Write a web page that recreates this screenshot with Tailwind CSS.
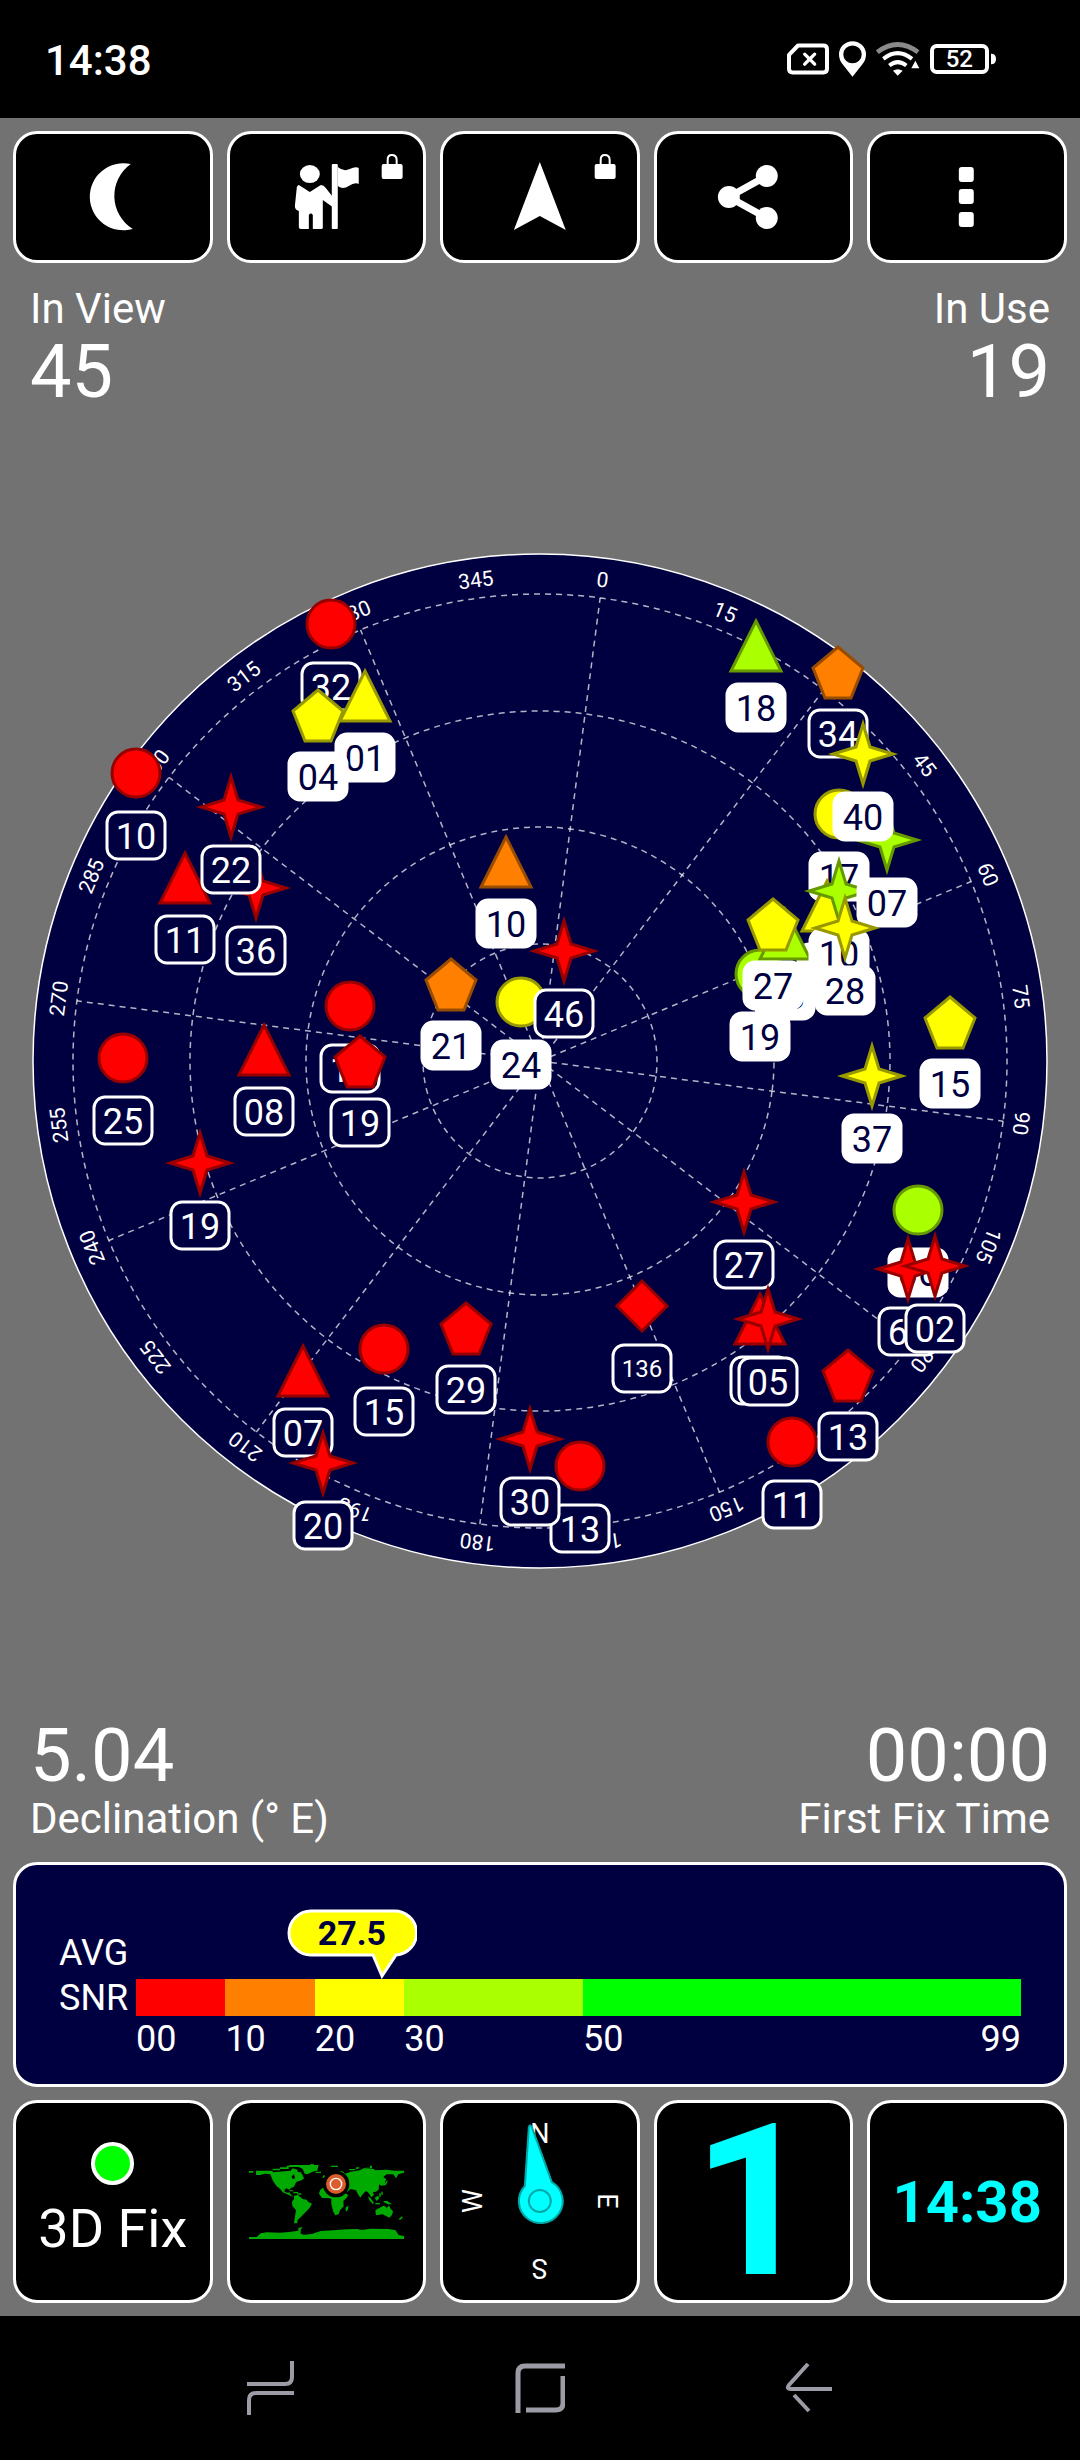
<!DOCTYPE html>
<html lang="en">
<head>
    <meta charset="UTF-8">
    <meta name="viewport" content="width=device-width, initial-scale=1.0">
    <title>GPS Status - Sky View</title>
    <script src="https://cdn.jsdelivr.net/npm/@tailwindcss/browser@4"></script>
</head>
<body class="min-h-screen flex flex-col bg-black text-white font-['Roboto',sans-serif]">

    <!-- Status bar -->
    <header class="h-[118px] flex items-center justify-between pl-[45px] pr-[84px]">
        <span class="pt-1 text-[42px] leading-[48px] font-medium">14:38</span>
        <div class="flex items-center gap-[10px]">
            <svg class="w-[42px] h-[32px]" viewBox="81 72 126 93" fill="none" stroke="#fff" stroke-width="12">
                <path d="M114 78H190Q201 78 201 89V148Q201 159 190 159H98Q87 159 87 148V106Z" stroke-linejoin="round"/>
                <path d="M134 104L164 134M164 104L134 134" stroke-linecap="round" stroke-width="10"/>
            </svg>
            <svg class="w-[27px] h-[36px]" viewBox="243 63 82 108" fill="#fff" fill-rule="evenodd">
                <path d="M284 171L254 133Q243 119 243 103A41 40 0 0 1 325 103Q325 119 314 133ZM284 76A28 27 0 1 0 284 130A28 27 0 1 0 284 76Z"/>
            </svg>
            <svg class="w-[44px] h-[34px]" viewBox="352 66 132 101" fill="none" stroke="#fff" stroke-width="12">
                <path d="M356 96Q417 50 478 96" stroke="#8a8a8a" stroke-width="14"/>
                <path d="M374 116Q417 82 460 116M392 136Q417 116 443 136"/>
                <path d="M403 152Q417 142 432 152L417 167ZM470 122L482 144H458Z" fill="#fff" stroke="none"/>
            </svg>
            <svg class="w-[66px] h-[30px]" viewBox="510 72 198 90" fill="none" stroke="#fff" stroke-width="12">
                <rect x="516" y="78" width="165" height="78" rx="14"/>
                <path d="M693 101Q708 101 708 117Q708 133 693 133Z" fill="#fff" stroke="none"/>
                <text x="598" y="142" text-anchor="middle" font-size="72" font-weight="500" fill="#fff" stroke="none">52</text>
            </svg>
        </div>
    </header>

    <main class="flex-1 flex flex-col bg-[#727272] p-[13px]">

        <!-- Toolbar -->
        <div class="grid grid-cols-5 gap-[14px]">
            <button type="button" aria-label="Night mode" class="h-[132px] rounded-3xl border-3 border-white bg-black">
                <svg class="w-full h-full" viewBox="3 3 194 126" fill="#fff">
                    <path d="M118 33A33.6 33.6 0 1 0 120 98A39 39 0 0 1 118 33Z"/>
                </svg>
            </button>
            <button type="button" aria-label="Guide to location" class="h-[132px] rounded-3xl border-3 border-white bg-black">
                <svg class="w-full h-full" viewBox="3 3 194 126" fill="#fff">
                    <ellipse cx="83" cy="43" rx="10" ry="9"/>
                    <path d="M72 54L83 61L94 54Q97 54 99 57L110 71V79L96 69V97Q96 98 94 98H86V84Q84 81 82 84V98H74Q72 98 72 96V80Q68 79 68 75L70 56Q71 54 72 54Z"/>
                    <rect x="105" y="33" width="6" height="65" rx="1"/>
                    <path d="M111 36Q117 41 123 38T132 37V53Q128 51 122 55T111 55Z"/>
                    <path d="M157 33H174Q176 33 176 35V46Q176 48 174 48H157Q155 48 155 46V35Q155 33 157 33Z"/>
                    <path d="M161 34V29Q161 24 165 24Q170 24 170 29V34" fill="none" stroke="#fff" stroke-width="2"/>
                </svg>
            </button>
            <button type="button" aria-label="Heading" class="h-[132px] rounded-3xl border-3 border-white bg-black">
                <svg class="w-full h-full" viewBox="3 3 194 126" fill="#fff">
                    <path d="M100 31L126 99L100 85L74 99Z"/>
                    <path d="M157 33H174Q176 33 176 35V46Q176 48 174 48H157Q155 48 155 46V35Q155 33 157 33Z"/>
                    <path d="M161 34V29Q161 24 165 24Q170 24 170 29V34" fill="none" stroke="#fff" stroke-width="2"/>
                </svg>
            </button>
            <button type="button" aria-label="Share" class="h-[132px] rounded-3xl border-3 border-white bg-black">
                <svg class="w-full h-full" viewBox="3 3 194 126" fill="#fff">
                    <path d="M113 45L75 66L113 87" fill="none" stroke="#fff" stroke-width="7"/>
                    <circle cx="113" cy="45" r="11"/>
                    <circle cx="75" cy="66" r="11"/>
                    <circle cx="113" cy="87" r="11"/>
                </svg>
            </button>
            <button type="button" aria-label="More options" class="h-[132px] rounded-3xl border-3 border-white bg-black">
                <svg class="w-full h-full" viewBox="3 3 194 126" fill="#fff">
                    <rect x="92" y="36" width="15" height="15" rx="3"/>
                    <rect x="92" y="58" width="15" height="15" rx="3"/>
                    <rect x="92" y="81" width="15" height="15" rx="3"/>
                </svg>
            </button>
        </div>

        <!-- Satellite counts -->
        <div class="flex justify-between px-[17px] pt-[22px]">
            <div>
                <p class="text-[42px] leading-[48px]">In View</p>
                <p class="mt-[3px] text-[74px] leading-[72px]">45</p>
            </div>
            <div class="text-right">
                <p class="text-[42px] leading-[48px]">In Use</p>
                <p class="mt-[3px] text-[74px] leading-[72px]">19</p>
            </div>
        </div>

        <!-- Sky view -->
        <div class="flex-1 flex items-center -mx-[13px]">
            <svg id="skyView" class="w-full" viewBox="0 535 1080 1060" role="img" aria-label="Satellite positions"></svg>
        </div>

        <!-- Declination and fix time -->
        <div class="flex justify-between px-[17px] pb-[19px]">
            <div>
                <p class="text-[74px] leading-[72px]">5.04</p>
                <p class="mt-[3px] text-[42px] leading-[48px]">Declination (° E)</p>
            </div>
            <div class="text-right">
                <p class="text-[74px] leading-[72px]">00:00</p>
                <p class="mt-[3px] text-[42px] leading-[48px]">First Fix Time</p>
            </div>
        </div>

        <!-- Signal strength -->
        <section class="flex rounded-3xl border-3 border-white bg-[#000040] pl-[43px] pr-[43px] pb-6 text-[36px]">
            <p class="w-[77px] shrink-0 pt-[66px] leading-[45px]">AVG<br>SNR</p>
            <div class="flex-1 pt-[114px]">
                <div class="relative flex h-[37px]">
                    <div class="grow-10 basis-0 bg-[#ff0000]"></div>
                    <div class="grow-10 basis-0 bg-[#ff8000]"></div>
                    <div class="grow-10 basis-0 bg-[#ffff00]"></div>
                    <div class="grow-20 basis-0 bg-[#aaff00]"></div>
                    <div class="grow-49 basis-0 bg-[#00ff00]"></div>
                    <div id="snrMarker" class="absolute bottom-full w-[130px] h-[70px] -ml-[95px]">
                        <svg class="absolute inset-0" viewBox="0 0 130 70" fill="#ff0" stroke="#fff" stroke-width="3">
                            <path d="M24 2H106A22 22 0 0 1 109 46L95 67L86 46H24A22 22 0 0 1 24 2Z"/>
                        </svg>
                        <span class="relative block text-center text-[34px] leading-[48px] font-bold text-[#000040]">27.5</span>
                    </div>
                </div>
                <div class="flex leading-[46px] -mb-[2px]">
                    <span class="grow-10 basis-0">00</span>
                    <span class="grow-10 basis-0">10</span>
                    <span class="grow-10 basis-0">20</span>
                    <span class="grow-20 basis-0">30</span>
                    <span class="grow-49 basis-0 flex justify-between"><span>50</span><span>99</span></span>
                </div>
            </div>
        </section>

        <!-- Bottom cards -->
        <div class="mt-[13px] grid grid-cols-5 gap-[14px]">
            <button type="button" class="h-[203px] rounded-3xl border-3 border-white bg-black flex flex-col items-center justify-center gap-3">
                <span class="w-[43px] h-[43px] rounded-full border-4 border-white bg-[#00ff00]"></span>
                <span class="text-[54px] leading-[64px]">3D Fix</span>
            </button>
            <button type="button" aria-label="World map" class="h-[203px] rounded-3xl border-3 border-white bg-black flex items-center justify-center">
                <svg class="w-[155px] h-[75px]" viewBox="57 75 465 225" fill="#00aa00">
                    <path d="M57 96H70V101H57ZM78 95H128V100L165 97L182 95L188 88L202 92V98L216 104L222 118L215 124L200 128L196 134L192 143L183 147L178 152L170 148L164 151V158L172 161L178 160L184 169L191 172L184 172L170 165L158 160L150 149L140 142L129 126L121 106L104 104L90 108H78Z"/>
                    <path d="M128 94V89H150V85H170V80H190V84H176V90H150V94ZM186 92H202V100H214V112H204L196 104Z"/>
                    <path d="M185 112L192 106L195 118L188 120ZM182 149H194V153H182ZM190 157L210 162V166L192 162Z" fill="#000"/>
                    <path d="M178 154H190V157H178ZM190 159H204V163H214V167H202V163H190Z"/>
                    <path d="M178 78H240V76H252V78H266L262 95L248 98L232 106L224 104L218 90L206 84H178Z"/>
                    <path d="M257 98H273V102H257ZM303 80H324V84H303ZM281 108L287 112L280 117H277Z"/>
                    <path d="M192 170L204 168L218 180L230 182L234 188L246 194L238 208L228 218L216 230L210 236L202 244V253H192L194 238L198 214L187 200L186 188L192 180Z"/>
                    <path d="M280 145L300 144L340 160L355 168L350 176L340 186L341 202L330 214L326 226L316 229L310 218L304 196V180L296 177H276L267 164L270 154Z"/>
                    <path d="M346 206L355 200L354 212L348 218Z"/>
                    <path d="M310 104L320 97H338L345 104L362 98L390 94L400 88L430 89L436 94L470 92L495 95H522V101L505 106L498 118L490 106L470 106L460 114L468 120L464 134L470 126L474 124L468 138L454 140L447 136L446 152L437 158L428 160L432 168L424 174L414 160L408 156L398 166L391 176L384 166L378 154L362 150L352 158L340 162L320 140Z"/>
                    <path d="M358 90H378V85H388V88L370 94H358ZM404 86H420V80H426V88H404Z"/>
                    <path d="M414 172L422 178L432 192L428 195L418 184ZM434 176L444 170L448 178L440 186ZM436 192H450V196H436ZM448 162H452V174H448ZM460 186L472 186L486 196H474L462 190ZM454 158H458V168H454Z"/>
                    <path d="M436 214L452 205L460 200L468 203L470 208L477 199L482 210L489 216L486 228L478 236L468 231L458 226L438 229Z"/>
                    <path d="M506 240L516 232L518 236L510 243Z"/>
                    <path d="M57 294H80L92 283L110 280L150 281L178 279L205 275V267L218 264L212 272L212 284L222 287L245 285L272 276L310 274L350 271L382 270L395 273L420 269L476 270L497 274L506 288L522 291V300H57Z"/>
                    <circle cx="318" cy="135" r="40" fill="#000"/>
                    <circle cx="318" cy="135" r="30" fill="#db5c2c"/>
                    <circle cx="318" cy="135" r="17" fill="none" stroke="#fff" stroke-width="4"/>
                </svg>
            </button>
            <button type="button" aria-label="Compass" class="h-[203px] rounded-3xl border-3 border-white bg-black">
                <svg class="w-full h-full" viewBox="3 3 194 197" fill="#fff" font-size="27" text-anchor="middle">
                    <text x="100" y="43">N</text>
                    <text x="100" y="43" transform="rotate(90 100 101)">E</text>
                    <text x="100" y="43" transform="rotate(180 100 101)">S</text>
                    <text x="100" y="43" transform="rotate(-90 100 101)">W</text>
                    <path d="M89 27Q90 23 92 27L112 82A22 22 0 1 1 85 86Z" fill="#00ffff" stroke="#00a8a8" stroke-width="2"/>
                    <circle cx="100" cy="101" r="11" fill="none" stroke="#00a8a8" stroke-width="2"/>
                </svg>
            </button>
            <button type="button" class="h-[203px] rounded-3xl border-3 border-white bg-black text-[212px] leading-[196px] font-bold text-[#00ffff]">1</button>
            <button type="button" class="h-[203px] rounded-3xl border-3 border-white bg-black text-[58px] leading-[64px] font-bold text-[#00ffff]">14:38</button>
        </div>
    </main>

    <!-- Navigation bar -->
    <nav class="h-36 grid grid-cols-3 items-center justify-items-center px-[136px]">
        <button type="button" aria-label="Recent apps">
            <svg class="w-12 h-[54px]" viewBox="0 0 48 54" fill="none" stroke="#9c9ca6" stroke-width="4">
                <path d="M0 23H38Q45 23 45 16V0M2 54V39Q2 32 9 32H47"/>
            </svg>
        </button>
        <button type="button" aria-label="Home">
            <svg class="w-[50px] h-[50px]" viewBox="0 0 50 50" fill="none" stroke="#9c9ca6" stroke-width="5">
                <path d="M3 50V10Q3 3 10 3H50M48 13V40Q48 47 41 47H11"/>
            </svg>
        </button>
        <button type="button" aria-label="Back">
            <svg class="w-12 h-[50px]" viewBox="0 0 48 50" fill="none" stroke="#9c9ca6" stroke-width="4">
                <path d="M23 1L4 22Q1 26 6 26H47M9 32L24 48"/>
            </svg>
        </button>
    </nav>

    <script>
        const skyView = document.getElementById('skyView');
        const cx = 540;
        const cy = 1062;
        const heading = 7.4;

        // Fill and outline for each signal level
        const colors = {
            red: ['#ff0000', '#980000'],
            orange: ['#ff8000', '#984c00'],
            yellow: ['#ffff00', '#989800'],
            lime: ['#aaff00', '#669800']
        };

        const shapes = {
            circle: '<circle r="24"/>',
            triangle: '<path d="M0 -24L25 26H-25Z"/>',
            pentagon: '<path d="M0 -24L25 -3L13 27H-13L-25 -3Z"/>',
            star: '<path d="M0 -30L7 -7L30 0L7 7L0 30L-7 7L-30 0L-7 -7Z"/>',
            diamond: '<path d="M0 -25L25 0L0 25L-25 0Z"/>'
        };

        // shape, signal, x, y, id, in use
        const satellites = [
            ['circle', 'red', 331, 625, '32', false],
            ['triangle', 'yellow', 365, 696, '01', true],
            ['pentagon', 'yellow', 318, 715, '04', true],
            ['circle', 'red', 136, 774, '10', false],
            ['triangle', 'red', 185, 878, '11', false],
            ['star', 'red', 256, 889, '36', false],
            ['star', 'red', 231, 808, '22', false],
            ['triangle', 'orange', 506, 862, '10', true],
            ['triangle', 'lime', 756, 646, '18', true],
            ['pentagon', 'orange', 838, 672, '34', false],
            ['circle', 'yellow', 839, 815, '17', true],
            ['circle', 'lime', 760, 975, '19', true],
            ['triangle', 'yellow', 827, 906, '12', true],
            ['triangle', 'lime', 785, 934, '23', true],
            ['pentagon', 'yellow', 773, 924, '27', true],
            ['star', 'lime', 839, 892, '10', true],
            ['star', 'lime', 887, 841, '07', true],
            ['star', 'yellow', 863, 755, '40', true],
            ['star', 'yellow', 845, 929, '28', true],
            ['pentagon', 'yellow', 950, 1022, '15', true],
            ['star', 'yellow', 872, 1077, '37', true],
            ['circle', 'yellow', 521, 1003, '24', true],
            ['star', 'red', 564, 952, '46', false],
            ['pentagon', 'orange', 451, 984, '21', true],
            ['circle', 'red', 350, 1007, '14', false],
            ['pentagon', 'red', 360, 1061, '19', false],
            ['circle', 'red', 123, 1059, '25', false],
            ['triangle', 'red', 264, 1050, '08', false],
            ['star', 'red', 200, 1164, '19', false],
            ['triangle', 'red', 303, 1371, '07', false],
            ['star', 'red', 323, 1464, '20', false],
            ['circle', 'red', 384, 1350, '15', false],
            ['pentagon', 'red', 466, 1328, '29', false],
            ['circle', 'red', 580, 1467, '13', false],
            ['star', 'red', 530, 1440, '30', false],
            ['diamond', 'red', 642, 1307, '136', false],
            ['star', 'red', 744, 1203, '27', false],
            ['triangle', 'red', 760, 1319, '12', false],
            ['star', 'red', 768, 1320, '05', false],
            ['circle', 'lime', 918, 1211, '06', true],
            ['star', 'red', 908, 1270, '61', false],
            ['star', 'red', 935, 1267, '02', false],
            ['circle', 'red', 792, 1443, '11', false],
            ['pentagon', 'red', 848, 1375, '13', false]
        ];

        // Disc, elevation rings and azimuth lines
        function renderGrid() {
            let html = `<circle cx="${cx}" cy="${cy}" r="507" fill="#000040" stroke="#fff" stroke-width="1.5"/>`;
            html += '<g fill="none" stroke="#fff" stroke-opacity="0.7" stroke-width="1.5" stroke-dasharray="6 5">';
            [117, 234, 350, 467].forEach(r => {
                html += `<circle cx="${cx}" cy="${cy}" r="${r}" transform="rotate(${heading} ${cx} ${cy})"/>`;
            });
            for (let az = 0; az < 360; az += 30) {
                html += `<path d="M${cx} ${cy}V${cy - 467}" transform="rotate(${az + heading} ${cx} ${cy})"/>`;
            }
            html += '</g><g fill="#fff" font-size="21" text-anchor="middle">';
            for (let az = 0; az < 360; az += 15) {
                html += `<text x="${cx}" y="${cy - 478}" transform="rotate(${az + heading} ${cx} ${cy})">${az}</text>`;
            }
            return html + '</g>';
        }

        function renderSatellite([shape, signal, x, y, id, inUse]) {
            const [fill, stroke] = colors[signal];
            const small = id.length > 2;
            return `
                <g transform="translate(${x} ${y})">
                    <g fill="${fill}" stroke="${stroke}" stroke-width="3">${shapes[shape]}</g>
                    <rect x="-29" y="39" width="58" height="47" rx="11" fill="${inUse ? '#fff' : '#000040'}" stroke="#fff" stroke-width="3"/>
                    <text y="${small ? 71 : 76}" text-anchor="middle" font-size="${small ? 24 : 36}" fill="${inUse ? '#000040' : '#fff'}">${id}</text>
                </g>`;
        }

        skyView.innerHTML = renderGrid() + satellites.map(renderSatellite).join('');

        // Place the average on the 0-99 scale
        document.getElementById('snrMarker').style.left = `${27.5 / 99 * 100}%`;
    </script>

</body>
</html>
